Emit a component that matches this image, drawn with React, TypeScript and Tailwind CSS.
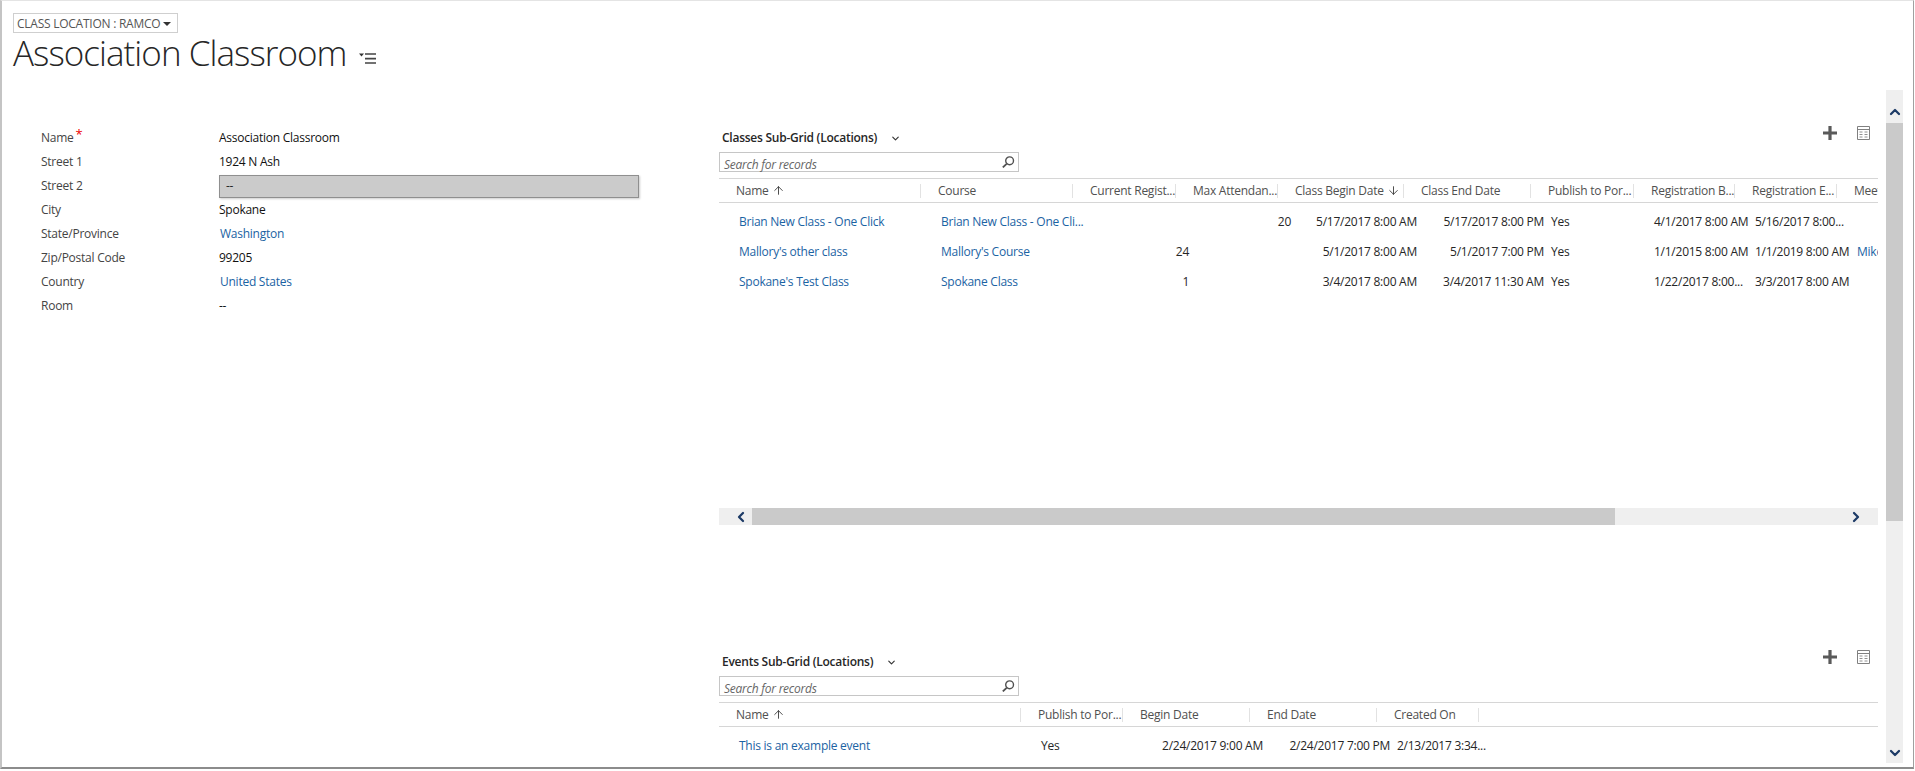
import { ArrowDown, ArrowUp, ChevronDown, ChevronLeft, ChevronRight, ChevronUp } from "lucide-react";

type Col = { label: string; width: number; align?: "left" | "right"; sort?: "up" | "down" };

const classCols: Col[] = [
  { label: "Name", width: 202, sort: "up" },
  { label: "Course", width: 152 },
  { label: "Current Regist...", width: 103, align: "right" },
  { label: "Max Attendan...", width: 102, align: "right" },
  { label: "Class Begin Date", width: 126, align: "right", sort: "down" },
  { label: "Class End Date", width: 127, align: "right" },
  { label: "Publish to Por...", width: 103 },
  { label: "Registration B...", width: 101 },
  { label: "Registration E...", width: 102 },
  { label: "Meeting", width: 60 },
];

const classRows = [
  ["Brian New Class - One Click", "Brian New Class - One Cli...", "", "20", "5/17/2017 8:00 AM", "5/17/2017 8:00 PM", "Yes", "4/1/2017 8:00 AM", "5/16/2017 8:00...", ""],
  ["Mallory's other class", "Mallory's Course", "24", "", "5/1/2017 8:00 AM", "5/1/2017 7:00 PM", "Yes", "1/1/2015 8:00 AM", "1/1/2019 8:00 AM", "Mike"],
  ["Spokane's Test Class", "Spokane Class", "1", "", "3/4/2017 8:00 AM", "3/4/2017 11:30 AM", "Yes", "1/22/2017 8:00...", "3/3/2017 8:00 AM", ""],
];

const eventCols: Col[] = [
  { label: "Name", width: 302, sort: "up" },
  { label: "Publish to Por...", width: 102 },
  { label: "Begin Date", width: 127, align: "right" },
  { label: "End Date", width: 127, align: "right" },
  { label: "Created On", width: 102 },
];

const eventRows = [["This is an example event", "Yes", "2/24/2017 9:00 AM", "2/24/2017 7:00 PM", "2/13/2017 3:34..."]];

const fields = [
  { label: "Name", value: "Association Classroom", required: true },
  { label: "Street 1", value: "1924 N Ash" },
  { label: "Street 2", value: "--", locked: true },
  { label: "City", value: "Spokane" },
  { label: "State/Province", value: "Washington", link: true },
  { label: "Zip/Postal Code", value: "99205" },
  { label: "Country", value: "United States", link: true },
  { label: "Room", value: "--" },
];

function MenuIcon() {
  return (
    <svg width="17" height="11" viewBox="0 0 17 11" className="ml-[12px] mt-[20px]">
      <path d="M0 0.5h5L2.5 3.5z" fill="#333" />
      <path d="M6 1h11M6 5.7h11M6 10h11" stroke="#444" strokeWidth="1.7" />
    </svg>
  );
}

function SearchIcon() {
  return (
    <svg width="14" height="12" viewBox="0 0 14 12">
      <circle cx="8.6" cy="4.8" r="3.9" fill="none" stroke="#505050" strokeWidth="1.4" />
      <path d="M5.6 7.8L1.8 11.4" stroke="#505050" strokeWidth="1.8" />
    </svg>
  );
}

function PlusIcon() {
  return (
    <svg width="14" height="14" viewBox="0 0 14 14">
      <path d="M5.4 0h3.2v5.4H14v3.2H8.6V14H5.4V8.6H0V5.4h5.4z" fill="#5a5a5a" />
    </svg>
  );
}

function GridIcon() {
  return (
    <svg width="13" height="14" viewBox="0 0 13 14">
      <path d="M0.5 0.5h12v13h-12z" fill="none" stroke="#808080" />
      <path d="M0.5 3.5h12" stroke="#808080" />
      <path d="M2.5 6h3M7.5 6h3M2.5 8.5h3M7.5 8.5h3M2.5 11h3M7.5 11h3" stroke="#909090" />
    </svg>
  );
}

function SubGrid({
  title,
  cols,
  rows,
  links,
}: {
  title: string;
  cols: Col[];
  rows: string[][];
  links: number[];
}) {
  return (
    <div className="w-[1159px] overflow-hidden">
      <div className="flex h-[29px] justify-between pr-[8px]">
        <div className="mt-[5px] flex h-[20px] items-center pl-[3px] font-semibold text-[#262626]">
          {title}
          <ChevronDown size={11} strokeWidth={2.5} className="ml-[13px] text-[#333]" />
        </div>
        <div className="mt-[3px] flex h-[14px] gap-[20px]">
          <PlusIcon />
          <GridIcon />
        </div>
      </div>
      <div className="flex h-[20px] w-[300px] items-center justify-between border border-[#c6c6c6] pl-[4px] pr-[3px]">
        <span className="pt-[5px] italic text-[#666]">Search for records</span>
        <SearchIcon />
      </div>
      <div className="mt-[6px] flex h-[25px] border-y border-[#d6d6d6]">
        {cols.map((col) => (
          <div key={col.label} className="flex shrink-0 items-center justify-between" style={{ width: col.width }}>
            <span className="flex items-center whitespace-nowrap pl-[17px] text-[#505050]">
              {col.label}
              {col.sort === "up" && <ArrowUp size={13} strokeWidth={1.6} className="ml-[3px] text-[#333]" />}
              {col.sort === "down" && <ArrowDown size={13} strokeWidth={1.6} className="ml-[3px] text-[#333]" />}
            </span>
            <span className="h-[14px] w-px shrink-0 bg-[#e2e2e2]" />
          </div>
        ))}
      </div>
      <div className="pl-[17px] pt-[4px]">
        {rows.map((row) => (
          <div key={row[0]} className="flex h-[30px] items-center">
            {row.map((cell, i) => (
              <div
                key={i}
                className={
                  "shrink-0 whitespace-nowrap pl-[3px] pr-[4px] " +
                  (cols[i].align === "right" ? "text-right " : "text-left ") +
                  (links.includes(i) ? "text-[#1b63a3]" : "text-[#262626]")
                }
                style={{ width: cols[i].width }}
              >
                {cell}
              </div>
            ))}
          </div>
        ))}
      </div>
    </div>
  );
}

export default function App() {
  return (
    <div className="h-[771px] w-[1915px] overflow-hidden bg-white font-['Open_Sans',sans-serif] text-[12px] leading-[16px] tracking-[-0.25px]">
      <div className="h-[769px] w-[1914px] border-b-2 border-l-2 border-r border-t border-b-[#8c8c8c] border-l-[#c4c4c4] border-r-[#a0a0a0] border-t-[#e4e4e4] pt-[12px]">
        <div className="pl-[11px]">
          <div className="flex h-[20px] w-[165px] items-center justify-between border border-[#cfcfcf] pl-[3px] pr-[6px] pt-[1px] text-[#555]">
            CLASS LOCATION : RAMCO
            <span className="h-0 w-0 border-x-[4px] border-t-[4px] border-x-transparent border-t-[#333]" />
          </div>
          <div className="flex h-[47px] items-start">
            <h1 className="text-[35px] font-light leading-[40px] tracking-[-0.95px] text-[#262626]">Association Classroom</h1>
            <MenuIcon />
          </div>
        </div>
        <div className="mt-[10px] flex">
          <div className="w-[717px] pl-[39px] pt-[36px]">
            {fields.map((f) => (
              <div key={f.label} className="flex h-[24px] items-center">
                <div className="flex w-[178px] shrink-0 text-[#444]">
                  {f.label}
                  {f.required && <span className="ml-[2px] -mt-[2px] text-[13px] leading-[12px] text-[#e00]">*</span>}
                </div>
                {f.locked ? (
                  <div className="flex h-[23px] w-[420px] items-center border border-[#8f8f8f] bg-[#cbcbcb] pl-[6px] text-[#262626] shadow-[1px_1px_2px_#ccc]">
                    {f.value}
                  </div>
                ) : (
                  <div className={f.link ? "pl-[1px] text-[#1b63a3]" : "text-[#111]"}>{f.value}</div>
                )}
              </div>
            ))}
          </div>
          <div className="flex h-[673px] w-[1159px] shrink-0 flex-col overflow-hidden pt-[33px]">
            <SubGrid title="Classes Sub-Grid (Locations)" cols={classCols} rows={classRows} links={[0, 1, 9]} />
            <div className="mt-[211px] flex h-[17px] shrink-0 bg-[#efefef]">
              <div className="flex w-[33px] items-center justify-end text-[#1c3a66]">
                <ChevronLeft size={16} strokeWidth={3.4} className="mr-[3px]" />
              </div>
              <div className="w-[863px] bg-[#cacaca]" />
              <div className="flex flex-1 items-center justify-end pr-[14px] text-[#1c3a66]">
                <ChevronRight size={16} strokeWidth={3.4} />
              </div>
            </div>
            <div className="mt-[122px]">
              <SubGrid title="Events Sub-Grid (Locations)" cols={eventCols} rows={eventRows} links={[0]} />
            </div>
          </div>
          <div className="ml-[8px] flex h-[673px] w-[17px] shrink-0 flex-col bg-[#efefef] text-[#1c3a66]">
            <div className="flex h-[33px] items-center justify-center pt-[11px]">
              <ChevronUp size={16} strokeWidth={3.4} />
            </div>
            <div className="h-[398px] bg-[#cacaca]" />
            <div className="flex flex-1 items-end justify-center pb-[2px]">
              <ChevronDown size={16} strokeWidth={3.4} />
            </div>
          </div>
        </div>
      </div>
    </div>
  );
}
